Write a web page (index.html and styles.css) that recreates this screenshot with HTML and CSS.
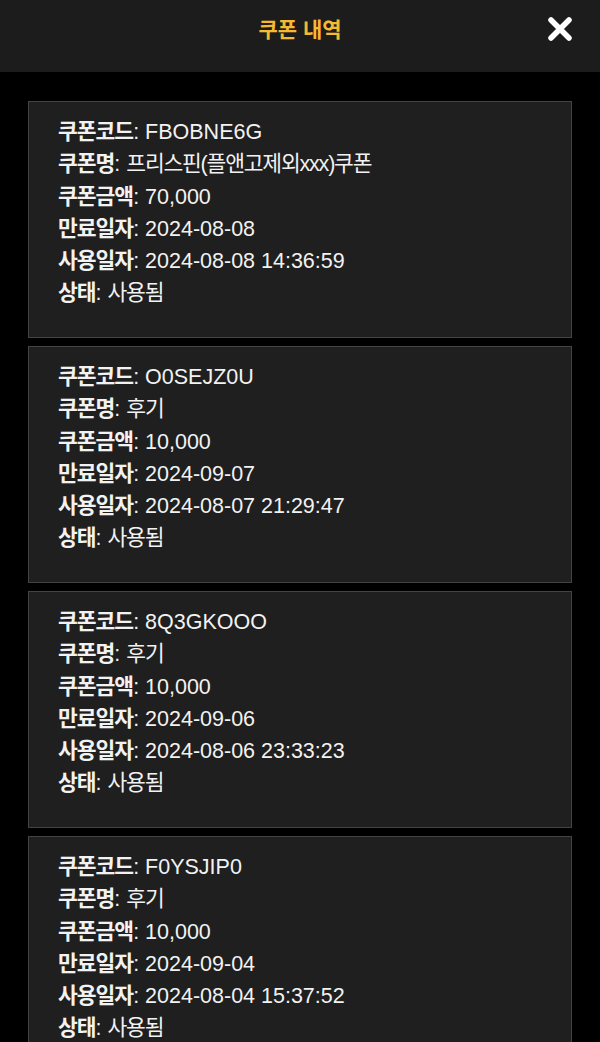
FILE: index.html
```html
<!DOCTYPE html>
<html lang="ko">
<head>
<meta charset="utf-8">
<title>쿠폰 내역</title>
<link rel="stylesheet" href="styles.css">
</head>
<body>
<header class="topbar">
  <h1 class="title">쿠폰 내역</h1>
  <button class="close" aria-label="닫기">
    <svg width="26" height="26" viewBox="0 0 26 26"><path d="M4 4 L22 22 M22 4 L4 22" stroke="#fff" stroke-width="5.5" stroke-linecap="round" fill="none"/></svg>
  </button>
</header>
<main class="list">
  <section class="card">
    <p><b>쿠폰코드</b>: FBOBNE6G</p>
    <p><b>쿠폰명</b>: <span class="ko">프리스핀(플앤고제외xxx)쿠폰</span></p>
    <p><b>쿠폰금액</b>: 70,000</p>
    <p><b>만료일자</b>: 2024-08-08</p>
    <p><b>사용일자</b>: 2024-08-08 14:36:59</p>
    <p><b>상태</b>: <span class="ko">사용됨</span></p>
  </section>
  <section class="card">
    <p><b>쿠폰코드</b>: O0SEJZ0U</p>
    <p><b>쿠폰명</b>: <span class="ko">후기</span></p>
    <p><b>쿠폰금액</b>: 10,000</p>
    <p><b>만료일자</b>: 2024-09-07</p>
    <p><b>사용일자</b>: 2024-08-07 21:29:47</p>
    <p><b>상태</b>: <span class="ko">사용됨</span></p>
  </section>
  <section class="card">
    <p><b>쿠폰코드</b>: 8Q3GKOOO</p>
    <p><b>쿠폰명</b>: <span class="ko">후기</span></p>
    <p><b>쿠폰금액</b>: 10,000</p>
    <p><b>만료일자</b>: 2024-09-06</p>
    <p><b>사용일자</b>: 2024-08-06 23:33:23</p>
    <p><b>상태</b>: <span class="ko">사용됨</span></p>
  </section>
  <section class="card">
    <p><b>쿠폰코드</b>: F0YSJIP0</p>
    <p><b>쿠폰명</b>: <span class="ko">후기</span></p>
    <p><b>쿠폰금액</b>: 10,000</p>
    <p><b>만료일자</b>: 2024-09-04</p>
    <p><b>사용일자</b>: 2024-08-04 15:37:52</p>
    <p><b>상태</b>: <span class="ko">사용됨</span></p>
  </section>
</main>
</body>
</html>
```
FILE: styles.css
```css
html, body {
  margin: 0;
  padding: 0;
  background: #000;
}
body {
  font-family: "Liberation Sans", "Noto Sans CJK KR", sans-serif;
  color: #f2f2f2;
  overflow: hidden;
}
.topbar {
  height: 72px;
  background: #1c1c1c;
  display: flex;
  align-items: flex-start;
  justify-content: center;
  position: relative;
}
.title {
  margin: 16px 0 0;
  font-size: 21px;
  line-height: 28px;
  font-weight: bold;
  color: #f5b932;
}
.close {
  position: absolute;
  right: 27px;
  top: 16px;
  width: 26px;
  height: 26px;
  padding: 0;
  border: 0;
  background: none;
  display: flex;
}
.list {
  padding: 29px 28px 0;
  display: flex;
  flex-direction: column;
  gap: 8px;
}
.card {
  background: #1f1f1f;
  border: 1px solid #444;
  padding: 14px 29px 28px;
  height: 237px;
  box-sizing: border-box;
  flex-shrink: 0;
}
.card p {
  margin: 0;
  font-size: 21.5px;
  line-height: 32.3px;
  white-space: nowrap;
}
.card b {
  font-weight: bold;
  letter-spacing: -1px;
}
.card .ko {
  letter-spacing: -1.2px;
}
```
